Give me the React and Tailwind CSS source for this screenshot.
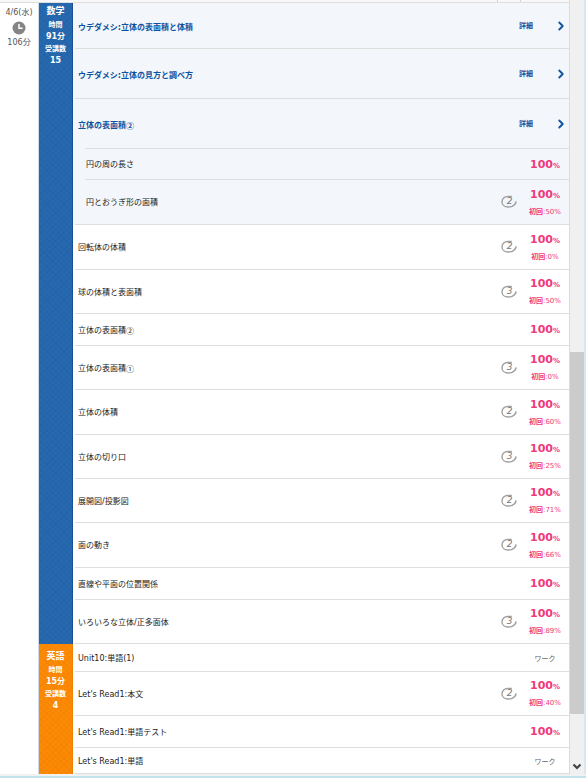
import React from 'react';
import { ChevronRight } from 'lucide-react';

const mathRows = [
    { title: 'ウデダメシ:立体の表面積と体積', kind: 'group', height: 'h-[46px]' },
    { title: 'ウデダメシ:立体の見方と調べ方', kind: 'group', height: 'h-[50px]' },
    { title: '立体の表面積', mark: '②', kind: 'openGroup', height: 'h-[50px]' },
    { title: '円の周の長さ', kind: 'child', height: 'h-[31px]', score: 100 },
    { title: '円とおうぎ形の面積', kind: 'lastChild', height: 'h-[45px]', score: 100, tries: 2, first: 50 },
    { title: '回転体の体積', height: 'h-[45px]', score: 100, tries: 2, first: 0 },
    { title: '球の体積と表面積', height: 'h-[44px]', score: 100, tries: 3, first: 50 },
    { title: '立体の表面積', mark: '②', height: 'h-[32px]', score: 100 },
    { title: '立体の表面積', mark: '①', height: 'h-[44px]', score: 100, tries: 3, first: 0 },
    { title: '立体の体積', height: 'h-[45px]', score: 100, tries: 2, first: 60 },
    { title: '立体の切り口', height: 'h-[44px]', score: 100, tries: 3, first: 25 },
    { title: '展開図/投影図', height: 'h-[44px]', score: 100, tries: 2, first: 71 },
    { title: '面の動き', height: 'h-[45px]', score: 100, tries: 2, first: 66 },
    { title: '直線や平面の位置関係', height: 'h-[32px]', score: 100 },
    { title: 'いろいろな立体/正多面体', height: 'h-[44px]', score: 100, tries: 3, first: 89 },
];

const englishRows = [
    { title: 'Unit10:単語(1)', height: 'h-[28px]' },
    { title: "Let's Read1:本文", height: 'h-[44px]', score: 100, tries: 2, first: 40 },
    { title: "Let's Read1:単語テスト", height: 'h-[32px]', score: 100 },
    { title: "Let's Read1:単語", height: 'h-[26px]' },
];

// 区切り線の手前の余白と、線の上の文字の余白
const lineStart = {
    group: 'pl-0.5',
    openGroup: 'pl-0.5',
    child: 'pl-3',
    lastChild: 'pl-0.5',
};

const textStart = {
    group: 'pl-[3px]',
    openGroup: 'pl-[3px]',
    child: 'pl-px',
    lastChild: 'pl-[11px]',
};

const ClockIcon = () => (
    <svg width="14" height="14" viewBox="0 0 14 14" aria-hidden="true">
        <circle cx="7" cy="7" r="6.5" fill="#858585" />
        <path d="M7 3v4.3h3.6" fill="none" stroke="#fff" strokeWidth="1.5" />
    </svg>
);

// 受講した回数
const TryCount = ({ count }) => (
    <svg className="mx-auto" width="16" height="14" viewBox="0 0 16 14" role="img" aria-label={`${count}回`}>
        <path
            d="M10.8 1.5H6.6C3.4 1.5 1 3.9 1 6.9c0 3 2.5 5.1 6 5.1 3.2 0 5.6-1 7.1-3.2M11.6 10.9c1.900-.8 3.200-2.200 3.500-4.600"
            fill="none"
            stroke="#a0a0a0"
            strokeWidth="1.4"
        />
        <text x="8.5" y="9" textAnchor="middle" fontSize="9" fontStyle="italic" fill="#777">{count}</text>
    </svg>
);

const Score = ({ row }) => {
    if (row.score === undefined) {
        return <span className="text-[7px] text-[#666]">ワーク</span>;
    }
    return (
        <div className="text-[#f03a7c]">
            <p className="text-[11px] leading-4 font-bold">
                {row.score}<span className="text-[7px]">%</span>
            </p>
            {row.first !== undefined && (
                <p className="text-[7px] leading-4">
                    <span className="font-bold">初回</span>:{row.first}%
                </p>
            )}
        </div>
    );
};

const LessonRow = ({ row }) => {
    const isGroup = row.kind === 'group' || row.kind === 'openGroup';
    const line = row.kind === 'openGroup' ? 'border-transparent' : 'border-[#dedede]';

    return (
        <tr className={row.kind ? 'bg-[#f3f7fc]' : 'bg-white'}>
            <th scope="row" className={`p-0 text-left font-normal ${lineStart[row.kind] || 'pl-0.5'}`}>
                <div
                    className={`flex items-center border-b ${line} ${row.height} ${textStart[row.kind] || 'pl-[3px]'} ${isGroup ? 'pt-1 font-bold text-[#0f529f]' : 'pt-0.5 text-[#222]'}`}
                >
                    {row.title}
                    {row.mark && <span className="font-['Noto_Sans_CJK_JP',sans-serif]">{row.mark}</span>}
                </div>
                {row.kind === 'openGroup' && <div className="-mt-px ml-2.5 border-b border-[#dedede]" />}
            </th>
            {isGroup ? (
                <td colSpan={2} className="border-b border-[#dedede] p-0">
                    <button type="button" className="flex w-full items-center justify-between pr-px pl-[22px] text-[7px] font-bold text-[#0f529f]">
                        詳細
                        <ChevronRight size={14} strokeWidth={3.2} />
                    </button>
                </td>
            ) : (
                <>
                    <td className="border-b border-[#dedede] p-0">
                        {row.tries && <TryCount count={row.tries} />}
                    </td>
                    <td className="border-b border-[#dedede] p-0 pt-0.5 text-center">
                        <Score row={row} />
                    </td>
                </>
            )}
        </tr>
    );
};

const Subject = ({ name, minutes, count, color, rows }) => (
    <section className="flex">
        <header className={`w-[34px] shrink-0 border-r text-center text-[8px] leading-3 font-bold text-white ${color}`}>
            <h2 className="mb-0.5 text-[9px] leading-3">{name}</h2>
            <p className="text-[7px] leading-3">時間</p>
            <p>{minutes}分</p>
            <p className="text-[7px] leading-3">受講数</p>
            <p>{count}</p>
        </header>
        <table className="w-full table-fixed border-separate border-spacing-0 text-[8px] leading-3">
            <colgroup>
                <col />
                <col className="w-6" />
                <col className="w-12" />
            </colgroup>
            <tbody>
                {rows.map((row, index) => (
                    <LessonRow key={index} row={row} />
                ))}
            </tbody>
        </table>
    </section>
);

const App = () => {
    return (
        <div className="min-h-screen bg-[#f1f1f1] font-['DejaVu_Sans','Noto_Sans_CJK_JP',sans-serif]">
            <div className="flex">
                <main className="min-w-0 flex-1 border-r border-[#dcdcdc] bg-white">
                    <div className="flex h-[3px] justify-end border-b border-[#dedede] bg-[#f8f8f8]">
                        <div className="w-6 border-x border-[#d5d5d5]" />
                        <div className="w-12" />
                    </div>
                    <div className="flex">
                        <div className="flex w-[38px] shrink-0 flex-col items-center pt-1 text-[8px] leading-3 text-[#555]">
                            <p>4/6(水)</p>
                            <div className="my-0.5">
                                <ClockIcon />
                            </div>
                            <p>106分</p>
                        </div>
                        <div className="min-w-0 flex-1 border-l border-[#cfdbe8]">
                            <Subject
                                name="数学"
                                minutes={91}
                                count={15}
                                color="pt-0.5 border-[#165097] bg-[#2769ae] bg-[repeating-linear-gradient(45deg,#1c589f40_0_1px,transparent_1px_4px),repeating-linear-gradient(-45deg,#1c589f40_0_1px,transparent_1px_4px)]"
                                rows={mathRows}
                            />
                            <Subject
                                name="英語"
                                minutes={15}
                                count={4}
                                color="pt-1.5 border-[#ef8000] bg-[#fd8a05] bg-[repeating-linear-gradient(45deg,#e6780040_0_1px,transparent_1px_4px),repeating-linear-gradient(-45deg,#e6780040_0_1px,transparent_1px_4px)]"
                                rows={englishRows}
                            />
                        </div>
                    </div>
                </main>
                <div className="flex w-3.5 shrink-0 flex-col bg-[#f0f0f0]">
                    <div className="grow-[352]" />
                    <div className="grow-[362] bg-[#cbcbcb]" />
                    <div className="grow-[48]" />
                    <svg className="mx-auto mb-0.5" width="10" height="10" viewBox="0 0 10 10" aria-hidden="true">
                        <path d="M1.5 2.5 5 6l3.5-3.5" fill="none" stroke="#444" strokeWidth="2.2" />
                    </svg>
                </div>
                <div className="w-0.5 shrink-0 bg-[#dde6ec]" />
            </div>
            <div className="mt-0.5 h-0.5 bg-[#c3e2ea]" />
        </div>
    );
};

export default App;
